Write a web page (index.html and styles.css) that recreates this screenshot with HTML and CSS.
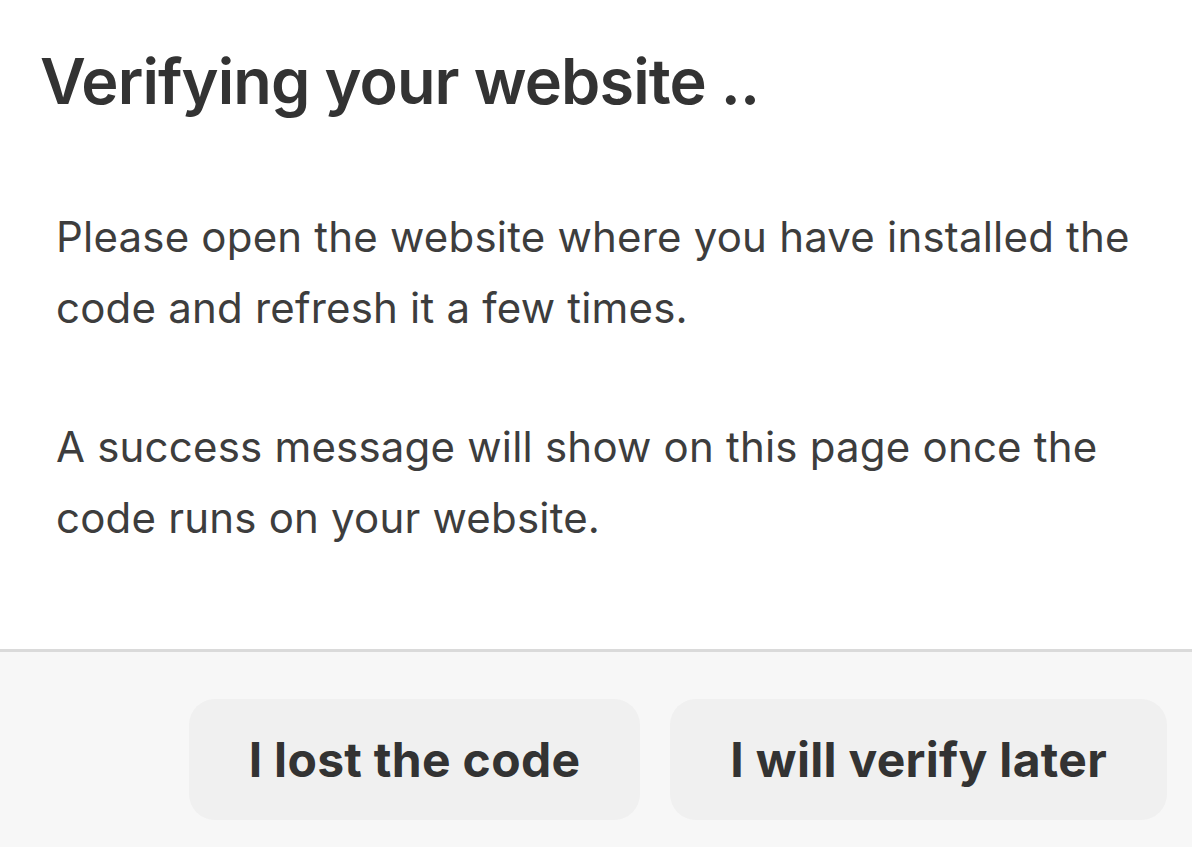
FILE: index.html
```html
<!DOCTYPE html>
<html lang="en">

<head>
    <meta charset="UTF-8">
    <meta name="viewport" content="width=device-width, initial-scale=1.0">
    <title>Verifying your website</title>
    <link rel="stylesheet" href="styles.css">
</head>

<body>
    <div class="dialog">
        <div class="dialog-header">
            <h1 class="dialog-title">Verifying your website ..</h1>
        </div>
        <div class="dialog-body">
            <p>Please open the website where you have installed the code and refresh it a few times.</p>
            <p>A success message will show on this page once the code runs on your website.</p>
        </div>
        <div class="dialog-footer">
            <button type="button" class="btn">I lost the code</button>
            <button type="button" class="btn">I will verify later</button>
        </div>
    </div>
</body>

</html>
```

FILE: styles.css
```css
* {
    margin: 0;
    padding: 0;
    box-sizing: border-box;
}

body {
    font-family: Inter, "Noto Sans", sans-serif;
    background: #fff;
    color: #333;
}

.dialog {
    width: 1192px;
    height: 847px;
    display: flex;
    flex-direction: column;
    overflow: hidden;
}

.dialog-header {
    padding: 43px 40px 0;
}

.dialog-title {
    font-size: 63px;
    font-weight: 600;
    line-height: 76px;
    letter-spacing: -0.9px;
    color: #333;
}

.dialog-body {
    padding: 82px 40px 96px 56px;
}

.dialog-body p {
    font-size: 42px;
    line-height: 71px;
    letter-spacing: 0.2px;
    color: #3d3d3d;
}

.dialog-body p + p {
    margin-top: 68px;
}

.dialog-footer {
    flex: 1;
    display: flex;
    justify-content: flex-end;
    align-items: flex-start;
    gap: 30px;
    padding: 47px 25px 0;
    background: #f7f7f7;
    border-top: 3px solid #dadada;
}

.btn {
    height: 121px;
    padding: 0 60px;
    border: none;
    border-radius: 26px;
    background: #f0f0f0;
    color: #333;
    font-family: inherit;
    font-size: 48px;
    font-weight: 700;
    letter-spacing: 0.3px;
    cursor: pointer;
}
```
